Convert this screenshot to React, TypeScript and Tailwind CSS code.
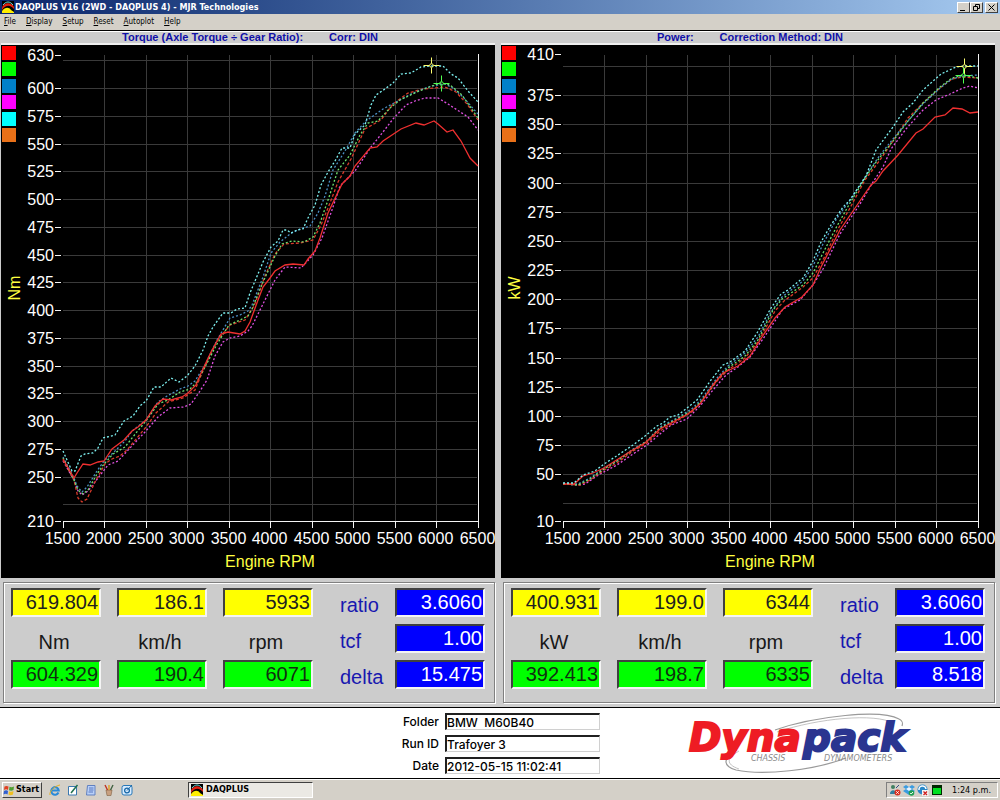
import React from "react";

type Series = { name: string; color: string; dash?: string; points: string };

interface ChartProps {
  title: string;
  correction: string;
  unit: string;
  min: number;
  scale: number; // pixels per unit
  labels: number[];
  grid: number[];
  series: Series[];
  peaks: { x: number; y: number; color: string }[];
}

interface ReadingsProps {
  id: string;
  top: string[];
  units: string[];
  bottom: string[];
  factors: { label: string; value: string }[];
}

const legendColors = ["#ff0000", "#00ff00", "#0080c8", "#ff00ff", "#00ffff", "#e87018"];
const rpmTicks = [1500, 2000, 2500, 3000, 3500, 4000, 4500, 5000, 5500, 6000, 6500];

const range = (from: number, to: number, step: number) =>
  Array.from({ length: Math.round((to - from) / step) + 1 }, (_, i) => from + i * step);

const torqueSeries: Series[] = [
  {
    name: "magenta",
    color: "#e050e0",
    dash: "2 2",
    points:
      "63,461 74,480 78,491 82,495 88,491 98,478 108,465 118,461 130,448 145,432 158,417 170,408 184,407 191,404 200,391 207,380 215,356 223,342 230,338 240,336 248,331 252,326 262,306 275,280 285,267 301,268 313,255 322,238 332,210 340,186 355,171 371,147 383,132 393,119 406,105 415,101 425,98 438,98 448,104 468,117 478,130",
  },
  {
    name: "orange",
    color: "#d83a2a",
    dash: "3 2",
    points:
      "63,460 74,480 78,498 82,502 87,499 95,482 105,464 112,459 120,456 127,450 137,438 146,427 156,413 168,402 183,398 195,390 202,373 217,341 230,325 245,320 254,306 265,276 275,254 284,244 300,243 313,240 321,225 330,203 338,182 351,159 365,129 381,120 393,104 408,93 423,89 445,87 456,92 467,104 478,120",
  },
  {
    name: "blue",
    color: "#4b8fc4",
    dash: "2 2",
    points:
      "63,457 74,478 77,486 82,492 87,487 97,471 104,461 113,453 125,441 132,431 146,420 158,402 167,396 180,389 188,386 195,381 205,365 217,340 230,318 240,315 248,311 252,305 263,277 271,253 280,242 290,234 300,229 310,226 318,213 325,196 333,170 345,151 355,133 366,121 383,109 396,102 413,93 431,86 445,84 453,88 463,97 478,114",
  },
  {
    name: "green",
    color: "#6fe06f",
    dash: "2 2",
    points:
      "63,458 74,480 78,490 83,494 88,490 97,474 104,464 113,454 125,447 136,433 146,421 158,404 168,400 180,392 190,389 197,382 205,367 217,344 229,325 240,320 248,316 252,309 263,282 275,256 282,244 292,241 304,242 313,237 320,223 328,200 338,170 350,155 360,135 368,123 378,121 390,108 400,100 417,92 432,86 441,83 450,85 462,95 478,118",
  },
  {
    name: "red",
    color: "#f03030",
    points:
      "63,459 74,478 77,473 83,464 90,465 98,462 104,461 112,449 124,440 132,431 138,427 146,420 155,406 163,399 171,400 182,397 188,393 196,385 202,371 211,352 221,334 228,332 240,334 245,331 250,322 258,300 263,287 270,278 275,271 285,265 293,264 304,265 308,259 315,251 320,238 328,213 342,184 350,176 355,166 370,148 377,147 383,141 401,129 416,123 424,125 429,123 434,121 438,124 447,132 453,130 461,141 470,158 478,166",
  },
  {
    name: "cyan",
    color: "#7df0f0",
    dash: "2 2",
    points:
      "63,451 67,460 72,471 75,471 81,456 85,454 93,453 98,448 103,438 115,435 124,421 133,416 140,406 146,401 154,387 161,387 171,378 179,382 187,376 195,366 203,350 208,336 213,327 223,313 231,313 237,309 245,308 250,293 263,262 271,247 278,241 283,230 287,230 291,233 297,230 303,229 308,218 315,205 321,185 328,172 335,161 342,148 350,148 355,134 365,125 371,105 376,95 385,89 393,83 401,74 411,73 421,67 431,66 443,66 451,74 458,78 468,91 478,102",
  },
];

const powerSeries: Series[] = [
  {
    name: "magenta",
    color: "#e050e0",
    dash: "2 2",
    points:
      "63,484 78,485 85,484 100,474 117,465 133,454 147,445 160,434 171,425 187,419 200,406 213,390 226,375 238,367 250,357 265,336 283,309 300,300 313,285 323,269 340,234 360,204 373,182 383,167 391,149 406,129 423,110 436,100 450,94 463,88 470,86 478,88",
  },
  {
    name: "orange",
    color: "#d83a2a",
    dash: "3 2",
    points:
      "63,484 80,485 90,480 104,470 117,463 133,451 147,443 160,431 177,421 193,411 203,400 217,381 228,370 245,358 258,342 275,311 284,301 303,287 313,278 325,256 338,229 350,208 365,180 380,160 393,141 408,118 423,103 440,88 452,79 463,77 478,78",
  },
  {
    name: "blue",
    color: "#4b8fc4",
    dash: "2 2",
    points:
      "63,484 78,484 90,478 104,468 117,461 133,449 147,441 160,427 177,418 193,408 203,397 217,378 228,366 245,353 258,337 271,312 282,297 303,281 313,266 323,244 337,218 350,200 365,177 380,155 393,139 408,121 423,104 440,88 452,79 463,76 478,75",
  },
  {
    name: "green",
    color: "#6fe06f",
    dash: "2 2",
    points:
      "63,484 78,485 82,483 90,479 104,469 117,461 133,450 147,441 160,428 177,419 193,410 203,399 217,380 228,368 245,356 258,340 273,310 282,299 303,285 313,273 323,253 337,226 350,203 365,178 373,166 393,141 408,121 423,103 440,87 452,78 463,75 478,78",
  },
  {
    name: "red",
    color: "#f03030",
    points:
      "63,484 74,484 83,476 93,473 104,468 115,461 131,451 145,443 160,429 173,422 188,414 200,404 213,385 223,373 238,366 250,356 262,337 275,318 285,307 302,297 313,285 321,267 340,230 353,211 371,185 376,181 383,171 398,155 416,133 423,129 435,117 445,115 453,108 462,109 470,113 478,112",
  },
  {
    name: "cyan",
    color: "#7df0f0",
    dash: "2 2",
    points:
      "63,483 74,483 83,475 95,471 104,464 115,457 133,445 145,436 157,426 163,423 170,417 178,415 187,408 197,400 211,380 223,365 230,362 245,351 257,333 271,308 281,294 288,290 303,278 313,261 321,242 331,225 343,207 350,200 366,176 376,150 393,127 403,112 413,103 423,90 441,74 456,67 464,66 478,66",
  },
];

const Chart: React.FC<ChartProps> = ({ title, correction, unit, min, scale, labels, grid, series, peaks }) => {
  const y = (value: number) => Math.round(521 - (value - min) * scale) + 0.5;
  const x = (rpm: number) => Math.round(62.6 + (rpm - 1500) * 0.083) + 0.5;

  return (
    <section className="pl-px pr-[5px]">
      <h2 className="flex h-[11px] justify-center gap-[26px] pl-1 text-[11px] leading-[10px] font-bold text-[#1010a8] [font-family:'Liberation_Sans',Arial,sans-serif]">
        <span>{title}</span>
        <span>{correction}</span>
      </h2>
      <div className="border-t-2 border-[#f0f0f0] bg-black">
        <svg
          viewBox="1 45 494 533"
          className="block h-auto w-full [font-family:'Liberation_Sans',Arial,sans-serif]"
          role="img"
          aria-label={title}
        >
          {legendColors.map((color, i) => (
            <rect key={color} x="2" y={46 + Math.round(i * 16.4)} width="14" height="14" fill={color} />
          ))}

          {/* Grid */}
          <g stroke="#3a3a3a" strokeWidth="1">
            {grid.map((value) => (
              <line key={value} x1="63" x2="477" y1={y(value)} y2={y(value)} />
            ))}
            {rpmTicks.slice(1, -1).map((rpm) => (
              <line key={rpm} x1={x(rpm)} x2={x(rpm)} y1="55" y2="521" />
            ))}
          </g>

          {/* Axes */}
          <g stroke="#f4f4f4" strokeWidth="1">
            <line x1="63" x2="479" y1="521.5" y2="521.5" />
            <line x1="478.5" x2="478.5" y1="54" y2="522" />
            {rpmTicks.map((rpm) => (
              <line key={rpm} x1={x(rpm)} x2={x(rpm)} y1="522" y2="528" />
            ))}
            {labels.map((value) => (
              <line key={value} x1="55" x2="61" y1={y(value)} y2={y(value)} />
            ))}
          </g>

          <g fill="#ffffff" fontSize="16">
            {labels.map((value) => (
              <text key={value} x="54" y={y(value) + 5.5} textAnchor="end">
                {value}
              </text>
            ))}
            {rpmTicks.map((rpm) => (
              <text key={rpm} x={x(rpm) - 1} y="544" textAnchor="middle">
                {rpm}
              </text>
            ))}
          </g>
          <g fill="#ffff40" fontSize="16">
            <text x="270" y="567" textAnchor="middle">
              Engine RPM
            </text>
            <text transform="translate(20 288) rotate(-90)" textAnchor="middle">
              {unit}
            </text>
          </g>

          {series.map((s) => (
            <polyline
              key={s.name}
              points={s.points}
              fill="none"
              stroke={s.color}
              strokeWidth="1.3"
              strokeDasharray={s.dash}
            />
          ))}

          {/* Peak markers */}
          {peaks.map((p) => (
            <g key={p.color} stroke={p.color} strokeWidth="1" fill="none">
              <path d={`M${p.x - 8} ${p.y}h6m4 0h6M${p.x} ${p.y - 8}v6m0 4v6`} />
              <circle cx={p.x} cy={p.y} r="1.8" />
            </g>
          ))}
        </svg>
      </div>
    </section>
  );
};

const fieldBase =
  "h-[29px] w-full min-w-0 rounded-none border-2 border-t-[#404040] border-l-[#404040] border-r-[#f4f4f4] border-b-[#f4f4f4] pr-px text-right text-[20px] leading-[25px] outline-none";

const Readings: React.FC<ReadingsProps> = ({ id, top, units, bottom, factors }) => {
  const factor = (i: number) => (
    <>
      <label htmlFor={`${id}-${factors[i].label}`} className="h-[29px] pl-[11px] leading-[34px] text-[#1818b0]">
        {factors[i].label}
      </label>
      <input
        id={`${id}-${factors[i].label}`}
        className={`${fieldBase} bg-[#0000ff] text-white`}
        value={factors[i].value}
        readOnly
      />
    </>
  );

  return (
    <section className="pt-[4px] pr-[5px] pb-[4px] pl-[3px]">
      <div className="border border-[#808080] p-px shadow-[inset_1px_1px_0_#fff,1px_1px_0_#fff]">
        <div className="grid grid-cols-[1fr_1fr_1fr_50px_1fr] gap-x-4 gap-y-[7px] pt-[4px] pr-[8px] pb-[12px] pl-[6px] text-[20px] [font-family:'Liberation_Sans',Arial,sans-serif]">
          {top.map((value, i) => (
            <input
              key={units[i]}
              aria-label={`Peak ${units[i]}`}
              className={`${fieldBase} bg-[#ffff00] text-[#202020]`}
              value={value}
              readOnly
            />
          ))}
          {factor(0)}
          {units.map((unit) => (
            <span key={unit} className="h-[29px] pr-1 text-center leading-[36px] text-[#181818]">
              {unit}
            </span>
          ))}
          {factor(1)}
          {bottom.map((value, i) => (
            <input
              key={units[i]}
              aria-label={`Compare ${units[i]}`}
              className={`${fieldBase} bg-[#00ff00] text-[#103010]`}
              value={value}
              readOnly
            />
          ))}
          {factor(2)}
        </div>
      </div>
    </section>
  );
};

const AppIcon = () => (
  <svg viewBox="0 0 12 12" className="size-3 shrink-0" aria-hidden="true">
    <rect width="12" height="12" fill="#000" />
    <path d="M0 7C1 1 10 1 12 6V8C9 4 4 3 0 9Z" fill="#e02010" />
    <path d="M1 4C4 0 8 0 11 4" stroke="#60e0e0" strokeWidth="1" fill="none" />
    <path d="M0 12V10C3 6 7 6 9 9L12 11V12Z" fill="#ffee00" />
  </svg>
);

const DynapackLogo = () => (
  <svg viewBox="0 0 236 62" className="h-[62px] w-[236px] shrink-0" role="img" aria-label="Dynapack Chassis Dynamometers">
    <g fill="none" stroke="#9a9a9a" strokeWidth="1.2">
      <path d="M90 17C130 3 196 -4 214 6C218 8 218 10 217 13" />
      <path d="M92 19C134 5 190 0 208 10" strokeWidth="0.6" />
      <path d="M52 37C38 44 37 53 51 57C78 63 130 57 161 45" />
      <path d="M54 38C42 45 40 51 54 56" strokeWidth="0.6" />
    </g>
    <g
      className="[font-family:'DejaVu_Sans',Verdana,sans-serif]"
      fontSize="39"
      fontWeight="700"
      fontStyle="italic"
      strokeWidth="2"
    >
      <text x="4" y="38" fill="#ee1c24" stroke="#ee1c24">
        Dyna
      </text>
      <text x="118" y="38" fill="#2a3590" stroke="#2a3590">
        pack
      </text>
    </g>
    <g
      className="[font-family:'DejaVu_Sans',Verdana,sans-serif]"
      fill="#8a8a8a"
      fontSize="8"
      fontStyle="italic"
    >
      <text x="66" y="48">
        CHASSIS
      </text>
      <text x="139" y="48">
        DYNAMOMETERS
      </text>
    </g>
  </svg>
);

const menuItems = ["File", "Display", "Setup", "Reset", "Autoplot", "Help"];

const runFields = [
  { id: "folder", label: "Folder", value: "BMW  M60B40" },
  { id: "run-id", label: "Run ID", value: "Trafoyer 3" },
  { id: "date", label: "Date", value: "2012-05-15 11:02:41" },
];

const raised =
  "border border-t-white border-l-white border-r-[#404040] border-b-[#404040] bg-[#d4d0c8]";

const TitleButton: React.FC<{ label: string; children: React.ReactNode }> = ({ label, children }) => (
  <button type="button" aria-label={label} className={`${raised} flex h-[11px] w-[13px] items-center justify-center`}>
    <svg viewBox="0 0 9 9" className="size-[9px]" fill="none" stroke="#000" strokeWidth="1" aria-hidden="true">
      {children}
    </svg>
  </button>
);

const QuickLaunch = () => (
  <div className="ml-[7px] flex gap-[6px]">
    <button type="button" aria-label="Internet Explorer">
      <svg viewBox="0 0 12 12" className="size-3" fill="none">
        <path d="M9.500 8.500A3.800 3.800 0 1 1 9.800 6.500H3" stroke="#2a8ad8" strokeWidth="2" />
        <path d="M1 11C0 8 5 2 11 1" stroke="#e8b020" strokeWidth="1" />
      </svg>
    </button>
    <button type="button" aria-label="Show Desktop">
      <svg viewBox="0 0 12 12" className="size-3">
        <path d="M1.500 2.500H9.500V11H1.500Z" fill="#fff" stroke="#3a78b0" />
        <path d="M4 9L10.500 1" stroke="#207050" strokeWidth="1.5" />
      </svg>
    </button>
    <button type="button" aria-label="Notepad">
      <svg viewBox="0 0 12 12" className="size-3">
        <path d="M2.500 1.500H10V11H1.500Z" fill="#b8d0f8" stroke="#6080c0" />
        <path d="M4 4H8.500M4 6H8.500M3.500 8H8" stroke="#4060b0" strokeWidth="0.800" />
      </svg>
    </button>
    <button type="button" aria-label="Paint">
      <svg viewBox="0 0 12 12" className="size-3">
        <path d="M3 6H9L8 11.500H4Z" fill="#c8a080" stroke="#806040" strokeWidth="0.600" />
        <path d="M4.500 6L2 1" stroke="#c03020" strokeWidth="1.400" />
        <path d="M6 6V1" stroke="#e0a020" strokeWidth="1.400" />
        <path d="M7.500 6L10 1" stroke="#406040" strokeWidth="1.400" />
      </svg>
    </button>
    <button type="button" aria-label="Outlook Express">
      <svg viewBox="0 0 12 12" className="size-3" fill="none">
        <rect x="1" y="1.500" width="10" height="9.500" rx="2" fill="#d8ecff" stroke="#2878b8" />
        <circle cx="6" cy="6.500" r="2.400" stroke="#1868a8" strokeWidth="1.300" />
        <path d="M6 6.500L11 1" stroke="#1868a8" />
      </svg>
    </button>
  </div>
);

const Tray = () => (
  <div className="mr-[2px] flex h-4 items-center gap-[2px] border border-t-[#808080] border-l-[#808080] border-r-white border-b-white pr-[6px] pl-[2px]">
    <svg viewBox="0 0 12 12" className="size-3" aria-hidden="true">
      <circle cx="4" cy="3" r="2" fill="#408060" />
      <path d="M1 10C1 5 7 5 8 10Z" fill="#3080a0" />
      <path d="M7 4L10 1" stroke="#305080" />
      <circle cx="8.500" cy="8.500" r="3" fill="#d83020" />
      <path d="M7.300 7.300L9.700 9.700M9.700 7.300L7.300 9.700" stroke="#fff" />
    </svg>
    <svg viewBox="0 0 12 12" className="size-3" aria-hidden="true">
      <path d="M0 3L3 1L6 3L9 1L12 3L9 5L12 7L6 11L0 7L3 5Z" fill="#3a9ce0" />
      <path d="M3 5L6 3L9 5L6 7Z" fill="#e8f4ff" />
      <circle cx="8.500" cy="9" r="2.800" fill="#20a050" />
      <path d="M7.200 9L8.200 10L10 8" stroke="#fff" fill="none" />
    </svg>
    <svg viewBox="0 0 12 12" className="size-3" aria-hidden="true">
      <circle cx="5.500" cy="5.500" r="5" fill="#2888c8" />
      <path d="M2 6A3.500 3.500 0 0 1 9 5" stroke="#fff" strokeWidth="1.500" fill="none" />
      <rect x="5" y="6" width="6.500" height="6" fill="#f4f4f4" />
      <path d="M6.500 7.500L10 11M10 7.500L6.500 11" stroke="#d02020" strokeWidth="1.300" />
    </svg>
    <svg viewBox="0 0 12 12" className="size-3" aria-hidden="true">
      <rect x="1" y="1" width="10" height="10" fill="#002800" />
      <rect x="2" y="4" width="8" height="6" fill="#00e020" />
    </svg>
    <time className="ml-[7px] text-[9px] leading-3">1:24 p.m.</time>
  </div>
);

const App: React.FC = () => {
  const factorsLeft = [
    { label: "ratio", value: "3.6060" },
    { label: "tcf", value: "1.00" },
    { label: "delta", value: "15.475" },
  ];
  const factorsRight = [
    { label: "ratio", value: "3.6060" },
    { label: "tcf", value: "1.00" },
    { label: "delta", value: "8.518" },
  ];

  return (
    <div className="min-h-screen bg-[#d4d0c8] text-black [font-family:'DejaVu_Sans_Condensed','DejaVu_Sans',Tahoma,sans-serif]">
      {/* Title bar */}
      <header className="flex h-[14px] items-center bg-linear-to-r from-[#0a246a] to-[#a6caf0] pr-[2px] pl-[2px]">
        <AppIcon />
        <h1 className="ml-px grow text-[9px] leading-[14px] font-bold text-white">
          DAQPLUS V16 (2WD - DAQPLUS 4) - MJR Technologies
        </h1>
        <TitleButton label="Minimize">
          <path d="M1 7.500H6" />
        </TitleButton>
        <TitleButton label="Restore">
          <path d="M3.500 3V1.500H7.500V5.500H6M1.500 3.500H5.500V7.500H1.500Z" />
        </TitleButton>
        <div className="ml-[2px] flex">
          <TitleButton label="Close">
            <path d="M1.500 1.500L7.500 7.500M7.500 1.500L1.500 7.500" />
          </TitleButton>
        </div>
      </header>

      <nav className="flex h-4 gap-[10px] pl-1 text-[8px] leading-4">
        {menuItems.map((item) => (
          <button key={item} type="button">
            <u>{item[0]}</u>
            {item.slice(1)}
          </button>
        ))}
      </nav>

      <main className="border-t border-black bg-[#cccccc]">
        <div className="grid grid-cols-2 border-t border-white">
          <Chart
            title="Torque (Axle Torque ÷ Gear Ratio):"
            correction="Corr: DIN"
            unit="Nm"
            min={210}
            scale={1.11}
            labels={[210, ...range(250, 600, 25), 630]}
            grid={range(225, 625, 25)}
            series={torqueSeries}
            peaks={[
              { x: 431.5, y: 65.5, color: "#ffff70" },
              { x: 441.5, y: 83.5, color: "#50ff50" },
            ]}
          />
          <Chart
            title="Power:"
            correction="Correction Method: DIN"
            unit="kW"
            min={10}
            scale={1.167}
            labels={[10, ...range(50, 375, 25), 410]}
            grid={range(25, 400, 25)}
            series={powerSeries}
            peaks={[
              { x: 464.5, y: 66.5, color: "#ffff70" },
              { x: 463.5, y: 75.5, color: "#50ff50" },
            ]}
          />
          <Readings
            id="torque"
            top={["619.804", "186.1", "5933"]}
            units={["Nm", "km/h", "rpm"]}
            bottom={["604.329", "190.4", "6071"]}
            factors={factorsLeft}
          />
          <Readings
            id="power"
            top={["400.931", "199.0", "6344"]}
            units={["kW", "km/h", "rpm"]}
            bottom={["392.413", "198.7", "6335"]}
            factors={factorsRight}
          />
        </div>

        {/* Run details */}
        <div className="flex border-y border-black bg-white pt-[5px] pb-[3px]">
          <form className="flex w-3/5 flex-col items-end gap-[5px] text-[12px] leading-[17px] font-medium [font-family:Inter,Arial,sans-serif]">
            {runFields.map((field) => (
              <div key={field.id} className="flex items-center gap-[6px]">
                <label htmlFor={field.id}>{field.label}</label>
                <input
                  id={field.id}
                  defaultValue={field.value}
                  className="h-[17px] w-[155px] border border-t-2 border-l-2 border-t-[#202020] border-l-[#202020] border-r-[#d0d0d0] border-b-[#d0d0d0] text-[12px] leading-[14px] outline-none"
                />
              </div>
            ))}
          </form>
          <div className="ml-[85px]">
            <DynapackLogo />
          </div>
        </div>
      </main>

      {/* Taskbar */}
      <footer className="flex h-[21px] items-center border-t border-white pl-[2px]">
        <button type="button" className={`${raised} flex h-4 w-10 items-center gap-px text-[9px] font-bold`}>
          <svg viewBox="0 0 12 12" className="size-3 shrink-0" aria-hidden="true">
            <path d="M1.500 2.500C3 1.500 4.500 2 5.500 2.500L5 6C4 5 2.500 5 1 6Z" fill="#e04020" />
            <path d="M6.500 2.800C8 3.500 9.500 3.300 11 2.500L10.500 6C9 6.800 7.500 6.800 6 6.200Z" fill="#50a030" />
            <path d="M1 7C2.500 6 4 6.200 5 7L4.500 10.500C3.500 9.500 2 9.500 .5 10.500Z" fill="#3060d0" />
            <path d="M6 7.200C7.500 8 9 7.800 10.500 7L10 10.500C8.500 11.300 7 11.300 5.500 10.800Z" fill="#f0c020" />
          </svg>
          Start
        </button>
        <QuickLaunch />
        <button
          type="button"
          className="ml-[55px] flex h-4 w-[125px] items-center gap-[3px] border border-t-[#404040] border-l-[#404040] border-r-white border-b-white bg-[#ebe9e4] pl-[2px] text-[9px] font-bold"
        >
          <AppIcon />
          DAQPLUS
        </button>
        <div className="grow" />
        <Tray />
      </footer>
    </div>
  );
};

export default App;
